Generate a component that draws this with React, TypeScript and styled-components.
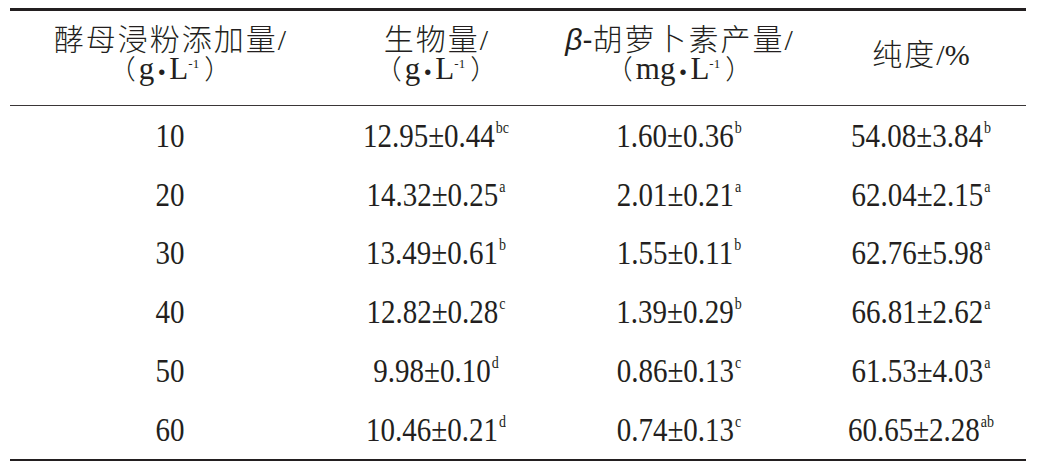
import React from "react";
import styled, { createGlobalStyle } from "styled-components";

const Global = createGlobalStyle`
  html, body { margin: 0; padding: 0; background: #ffffff; }
  body { width: 1037px; height: 468px; overflow: hidden; }
`;

const Page = styled.div`
  padding: 8px 11px 0 10px;
`;

const Table = styled.div`
  display: grid;
  grid-template-columns: 320px 212px 274px 210px;
  width: 1016px;
  border-top: 3px solid #231f20;
  border-bottom: 2.5px solid #231f20;
  color: #231f20;
`;

const HeadCell = styled.div`
  display: flex;
  flex-direction: column;
  align-items: center;
  justify-content: center;
  height: 82px;
  padding-bottom: 12px;
  border-bottom: 1.5px solid #3a3637;
`;

const HeadLine = styled.div`
  font-family: "Noto Sans CJK SC", "Noto Sans", sans-serif;
  font-weight: 300;
  font-size: 30px;
  letter-spacing: 2px;
  line-height: 32px;
  height: 32px;
  white-space: nowrap;
`;

const UnitLine = styled.div`
  font-family: "Liberation Serif", "Noto Sans CJK SC", serif;
  font-size: 31px;
  line-height: 30px;
  height: 30px;
  white-space: nowrap;
`;

const Paren = styled.span<{ $side: "l" | "r" }>`
  font-family: "Noto Sans CJK SC", sans-serif;
  font-weight: 300;
  font-size: 27px;
  margin: ${(p) => (p.$side === "l" ? "0 3px 0 0" : "0 0 0 5px")};
`;

const Beta = styled.span`
  font-family: "Liberation Sans", sans-serif;
  font-style: italic;
  letter-spacing: 0;
`;

const Hyphen = styled.span`
  font-family: "Liberation Sans", sans-serif;
  letter-spacing: 0;
`;

const Slash = styled.span`
  font-family: "Liberation Serif", serif;
  letter-spacing: 0;
`;

const Dot = styled.span`
  font-family: "Liberation Sans", sans-serif;
  font-size: 20px;
  margin: 0 4px;
`;

const Cell = styled.div`
  display: flex;
  align-items: center;
  justify-content: center;
  height: 58.8px;
  padding-top: 2px;
  box-sizing: border-box;
  font-family: "Liberation Serif", "Times New Roman", serif;
  font-size: 29px;
  white-space: nowrap;
`;

const Num = styled.span`
  display: inline-block;
  transform: scaleY(1.14);
  line-height: 1;
`;

const Sup = styled.span`
  font-size: 14px;
  line-height: 1;
  position: relative;
  top: -13px;
  margin-left: 1px;
`;

const UnitSup = styled.span`
  font-size: 13px;
  line-height: 1;
  position: relative;
  top: -11px;
`;

type Row = { dose: string; bio: [string, string]; car: [string, string]; pur: [string, string] };

const rows: Row[] = [
  { dose: "10", bio: ["12.95±0.44", "bc"], car: ["1.60±0.36", "b"], pur: ["54.08±3.84", "b"] },
  { dose: "20", bio: ["14.32±0.25", "a"], car: ["2.01±0.21", "a"], pur: ["62.04±2.15", "a"] },
  { dose: "30", bio: ["13.49±0.61", "b"], car: ["1.55±0.11", "b"], pur: ["62.76±5.98", "a"] },
  { dose: "40", bio: ["12.82±0.28", "c"], car: ["1.39±0.29", "b"], pur: ["66.81±2.62", "a"] },
  { dose: "50", bio: ["9.98±0.10", "d"], car: ["0.86±0.13", "c"], pur: ["61.53±4.03", "a"] },
  { dose: "60", bio: ["10.46±0.21", "d"], car: ["0.74±0.13", "c"], pur: ["60.65±2.28", "ab"] },
];

const Unit: React.FC<{ u: string }> = ({ u }) => (
  <UnitLine>
    <Paren $side="l">（</Paren>
    {u}
    <Dot>•</Dot>L<UnitSup>-1</UnitSup>
    <Paren $side="r">）</Paren>
  </UnitLine>
);

const Val: React.FC<{ v: [string, string] }> = ({ v }) => (
  <Cell>
    <Num>
      {v[0]}
      <Sup>{v[1]}</Sup>
    </Num>
  </Cell>
);

export default function App() {
  return (
    <>
      <Global />
      <Page>
        <Table>
          <HeadCell>
            <HeadLine>
              酵母浸粉添加量<Slash>/</Slash>
            </HeadLine>
            <Unit u="g" />
          </HeadCell>
          <HeadCell>
            <HeadLine>
              生物量<Slash>/</Slash>
            </HeadLine>
            <Unit u="g" />
          </HeadCell>
          <HeadCell>
            <HeadLine>
              <Beta>β</Beta>
              <Hyphen>-</Hyphen>胡萝卜素产量<Slash>/</Slash>
            </HeadLine>
            <Unit u="mg" />
          </HeadCell>
          <HeadCell>
            <HeadLine>
              纯度<Slash>/%</Slash>
            </HeadLine>
          </HeadCell>
          {rows.map((r) => (
            <React.Fragment key={r.dose}>
              <Cell>
                <Num>{r.dose}</Num>
              </Cell>
              <Val v={r.bio} />
              <Val v={r.car} />
              <Val v={r.pur} />
            </React.Fragment>
          ))}
        </Table>
      </Page>
    </>
  );
}
